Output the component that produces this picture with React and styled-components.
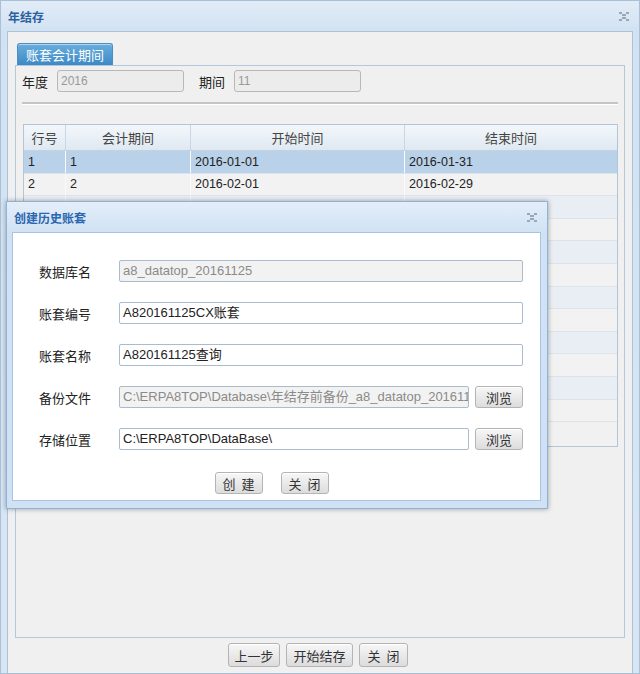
import React from "react";
import styled, { createGlobalStyle } from "styled-components";

const GlobalStyle = createGlobalStyle`
  html, body {
    margin: 0;
    padding: 0;
  }
  body {
    font-family: "Liberation Sans", "Noto Sans CJK SC", sans-serif;
    font-size: 13px;
    color: #222;
  }
  * {
    box-sizing: border-box;
  }
`;

const Window = styled.div`
  position: relative;
  width: 640px;
  height: 674px;
  display: flex;
  flex-direction: column;
  background: linear-gradient(#e2ecf7, #d2e2f2 30px, #d8e6f4);
  border: 1px solid #a9c0d9;
  overflow: hidden;
`;

const TitleBar = styled.div`
  height: 30px;
  flex-shrink: 0;
  display: flex;
  align-items: center;
  justify-content: space-between;
  padding: 0 10px 0 7px;
`;

const Title = styled.span`
  font-family: "Noto Sans CJK SC", sans-serif;
  font-size: 12px;
  font-weight: bold;
  color: #2a5f9f;
`;

const CloseIcon = () => (
  <svg width="10" height="9" viewBox="0 0 10 9">
    <g fill="#9aa7b6">
      <rect x="0" y="0" width="3" height="2" />
      <rect x="7" y="0" width="3" height="2" />
      <rect x="3" y="2" width="4" height="2" />
      <rect x="3" y="5" width="4" height="2" />
      <rect x="0" y="7" width="3" height="2" />
      <rect x="7" y="7" width="3" height="2" />
    </g>
  </svg>
);

const Body = styled.div`
  flex: 1;
  display: flex;
  flex-direction: column;
  margin: 0 6px 0 6px;
  padding: 11px 7px 0 7px;
  background: #f0f0f0;
  border: 1px solid #aac2da;
  border-bottom: none;
`;

const Tab = styled.div`
  align-self: flex-start;
  margin-left: 2px;
  height: 22px;
  padding: 0 8px;
  line-height: 21px;
  font-family: "Noto Sans CJK SC", sans-serif;
  font-size: 13px;
  color: #fff;
  background: linear-gradient(#68aede, #3d89c5);
  border: 1px solid #4a8ec4;
  border-bottom: none;
  border-radius: 3px 3px 0 0;
  box-shadow: inset 0 1px 0 rgba(255, 255, 255, 0.5);
`;

const TabPanel = styled.div`
  height: 573px;
  display: flex;
  flex-direction: column;
  padding: 4px 6px 0 6px;
  border: 1px solid #b3c8dd;
  background: #f0f0f0;
`;

const FieldRow = styled.div`
  display: flex;
  align-items: center;
  height: 22px;
`;

const FieldLabel = styled.span`
  width: 35px;
  flex-shrink: 0;
  font-family: "Noto Sans CJK SC", sans-serif;
  font-size: 13px;
  color: #222;
`;

const GrayInput = styled.div`
  width: 127px;
  height: 22px;
  margin-right: ${(p) => p.gap || 0}px;
  padding: 0 3px;
  line-height: 20px;
  font-size: 12px;
  color: #999;
  background: #ececec;
  border: 1px solid #b8b8b8;
  border-radius: 3px;
`;

const Separator = styled.div`
  margin: 10px 0 0 0;
  height: 3px;
  border-top: 2px solid #c4c4c4;
  border-bottom: 1px solid #fff;
`;

const Grid = styled.div`
  margin: 19px 0 0 1px;
  width: 595px;
  height: 323px;
  border: 1px solid #b2c4d6;
  background: #f1f1f1;
`;

const GridRow = styled.div`
  display: grid;
  grid-template-columns: 42px 125px 214px 1fr;
  height: ${(p) => (p.head ? 26 : 22.6)}px;
  background: ${(p) =>
    p.head
      ? "linear-gradient(#f3f7fb, #dfe8f1)"
      : p.selected
      ? "#b9d2e9"
      : p.odd
      ? "#e9eef4"
      : "#f2f2f2"};
  border-bottom: 1px solid ${(p) => (p.head ? "#c5d3e1" : "#dde3ea")};
`;

const Cell = styled.div`
  display: flex;
  align-items: center;
  justify-content: ${(p) => (p.center ? "center" : "flex-start")};
  padding: 0 4px;
  font-family: ${(p) =>
    p.center ? '"Noto Sans CJK SC", sans-serif' : '"Liberation Sans", "Noto Sans CJK SC", sans-serif'};
  font-size: ${(p) => (p.center ? 13 : 12.5)}px;
  color: ${(p) => (p.center ? "#444" : "#222")};
  border-right: 1px solid ${(p) => (p.center ? "#c9d6e3" : "#fafafa")};
  white-space: nowrap;
  overflow: hidden;
  &:last-child {
    border-right: none;
  }
`;

const Footer = styled.div`
  flex: 1;
  display: flex;
  align-items: center;
  justify-content: center;
  gap: 6px;
  padding: 0 4px 1px 0;
`;

const Button = styled.button`
  width: ${(p) => p.w}px;
  height: ${(p) => p.h || 24}px;
  flex-shrink: 0;
  padding: 0;
  font-family: "Noto Sans CJK SC", sans-serif;
  font-size: 13px;
  color: #333;
  letter-spacing: ${(p) => (p.spaced ? "6px" : "0")};
  text-indent: ${(p) => (p.spaced ? "6px" : "0")};
  background: linear-gradient(#f7f7f7, #dcdcdc);
  border: 1px solid #b4b4b4;
  border-radius: 3px;
  box-shadow: inset 0 1px 0 #fff;
`;

const Dialog = styled.div`
  position: absolute;
  left: 5px;
  top: 200px;
  width: 542px;
  height: 308px;
  display: flex;
  flex-direction: column;
  background: linear-gradient(#e4eef9, #d0e2f4 30px, #cfe1f3);
  border: 1px solid #8fb3d8;
  box-shadow: 0 0 5px rgba(0, 0, 0, 0.35);
`;

const DialogTitle = styled(Title)`
  color: #2b66b0;
`;

const DialogBody = styled.div`
  flex: 1;
  margin: 0 6px 7px 5px;
  padding: 27px 17px 0 26px;
  background: #fff;
  border: 1px solid #a6c5e4;
  display: flex;
  flex-direction: column;
  gap: 20px;
`;

const FormRow = styled.div`
  display: flex;
  align-items: center;
  gap: 6px;
  height: 22px;
`;

const FormLabel = styled.span`
  width: 74px;
  flex-shrink: 0;
  font-family: "Noto Sans CJK SC", sans-serif;
  font-size: 13px;
  color: #222;
`;

const TextInput = styled.div`
  flex: 1;
  min-width: 0;
  height: 22px;
  padding: 0 3px;
  line-height: 20px;
  font-size: 13px;
  color: ${(p) => (p.disabled ? "#8a8a8a" : "#222")};
  background: ${(p) => (p.disabled ? "#f2f2f2" : "#fff")};
  border: 1px solid #a9bccf;
  border-radius: 2px;
  white-space: nowrap;
  overflow: hidden;
`;

const DialogActions = styled.div`
  display: flex;
  justify-content: center;
  gap: 18px;
  margin-top: 2px;
  padding-right: 19px;
`;

const days = [31, 29, 31, 30, 31, 30, 31, 31, 30, 31, 30, 31];
const periods = days.map((d, i) => {
  const m = String(i + 1).padStart(2, "0");
  return { no: i + 1, start: `2016-${m}-01`, end: `2016-${m}-${d}` };
});

const formRows = [
  { label: "数据库名", value: "a8_datatop_20161125", disabled: true },
  { label: "账套编号", value: "A820161125CX账套" },
  { label: "账套名称", value: "A820161125查询" },
  { label: "备份文件", value: "C:\\ERPA8TOP\\Database\\年结存前备份_a8_datatop_20161125.bak", disabled: true, browse: true },
  { label: "存储位置", value: "C:\\ERPA8TOP\\DataBase\\", browse: true },
];

const App = () => {
  return (
    <Window>
      <GlobalStyle />
      <TitleBar>
        <Title>年结存</Title>
        <CloseIcon />
      </TitleBar>
      <Body>
        <Tab>账套会计期间</Tab>
        <TabPanel>
          <FieldRow>
            <FieldLabel>年度</FieldLabel>
            <GrayInput gap={15}>2016</GrayInput>
            <FieldLabel>期间</FieldLabel>
            <GrayInput>11</GrayInput>
          </FieldRow>
          <Separator />
          <Grid>
            <GridRow head>
              <Cell center>行号</Cell>
              <Cell center>会计期间</Cell>
              <Cell center>开始时间</Cell>
              <Cell center>结束时间</Cell>
            </GridRow>
            {periods.map((p, i) => (
              <GridRow key={p.no} selected={i === 0} odd={i % 2 === 0}>
                <Cell>{p.no}</Cell>
                <Cell>{p.no}</Cell>
                <Cell>{p.start}</Cell>
                <Cell>{p.end}</Cell>
              </GridRow>
            ))}
          </Grid>
        </TabPanel>
        <Footer>
          <Button w={52}>上一步</Button>
          <Button w={67}>开始结存</Button>
          <Button w={49} spaced>
            关闭
          </Button>
        </Footer>
      </Body>

      <Dialog>
        <TitleBar>
          <DialogTitle>创建历史账套</DialogTitle>
          <CloseIcon />
        </TitleBar>
        <DialogBody>
          {formRows.map((r) => (
            <FormRow key={r.label}>
              <FormLabel>{r.label}</FormLabel>
              <TextInput disabled={r.disabled}>{r.value}</TextInput>
              {r.browse && (
                <Button w={48} h={22}>
                  浏览
                </Button>
              )}
            </FormRow>
          ))}
          <DialogActions>
            <Button w={48} h={22} spaced>
              创建
            </Button>
            <Button w={48} h={22} spaced>
              关闭
            </Button>
          </DialogActions>
        </DialogBody>
      </Dialog>
    </Window>
  );
};

export default App;
